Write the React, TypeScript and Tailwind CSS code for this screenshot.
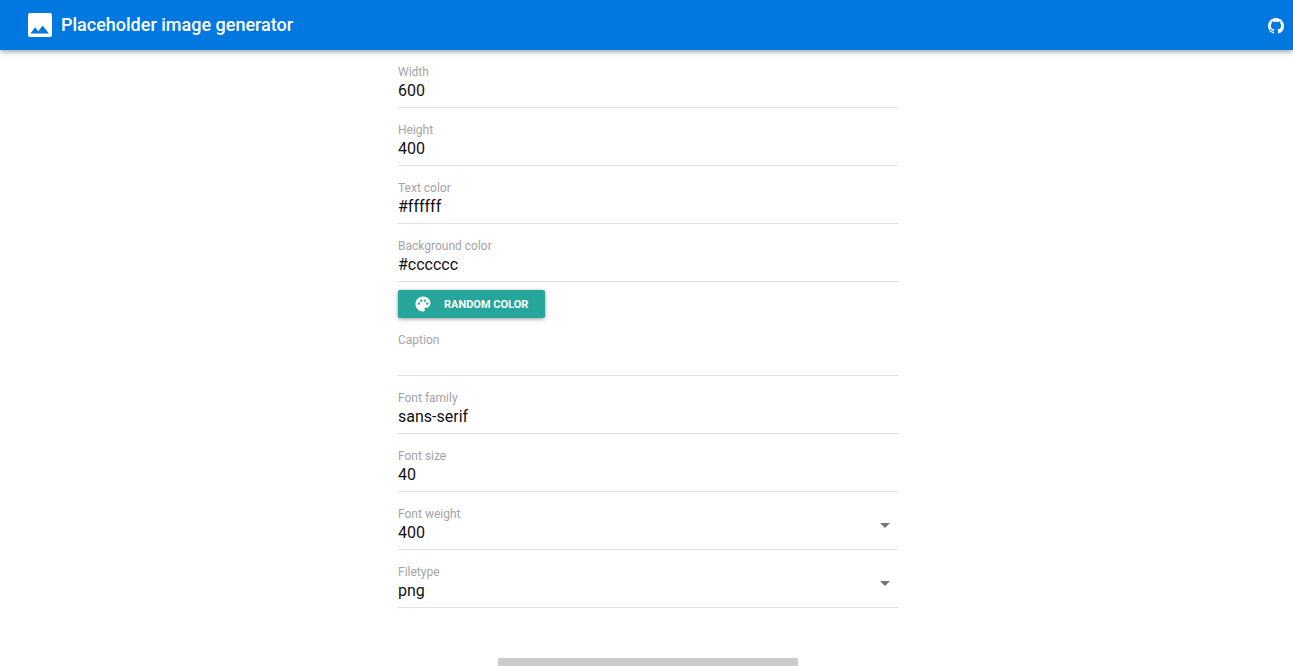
import React from 'react';

const ImageIcon = () => (
  <svg width="24" height="24" viewBox="0 0 24 24" fill="#fff">
    <path d="M2 0h20a2 2 0 0 1 2 2v20a2 2 0 0 1-2 2H2a2 2 0 0 1-2-2V2a2 2 0 0 1 2-2z" />
    <path fill="#0078e0" d="M2.5 20.5l4.6-6.2 3.2 3.9 4.3-5.6 6.4 7.9z" />
  </svg>
);

const GithubIcon = () => (
  <svg width="16" height="16" viewBox="0 0 16 16" fill="#fff">
    <path d="M8 0C3.58 0 0 3.58 0 8c0 3.54 2.29 6.53 5.47 7.59.4.07.55-.17.55-.38 0-.19-.01-.82-.01-1.49-2.01.37-2.53-.49-2.69-.94-.09-.23-.48-.94-.82-1.13-.28-.15-.68-.52-.01-.53.63-.01 1.08.58 1.23.82.72 1.21 1.87.87 2.33.66.07-.52.28-.87.51-1.07-1.78-.2-3.64-.89-3.64-3.95 0-.87.31-1.59.82-2.15-.08-.2-.36-1.02.08-2.12 0 0 .67-.21 2.2.82.64-.18 1.32-.27 2-.27s1.36.09 2 .27c1.53-1.04 2.2-.82 2.2-.82.44 1.1.16 1.92.08 2.12.51.56.82 1.27.82 2.15 0 3.07-1.87 3.75-3.65 3.95.29.25.54.73.54 1.48 0 1.07-.01 1.93-.01 2.2 0 .21.15.46.55.38A8.01 8.01 0 0 0 16 8c0-4.42-3.58-8-8-8z" />
  </svg>
);

const PaletteIcon = () => (
  <svg width="18" height="18" viewBox="0 0 24 24" fill="#fff">
    <path d="M12 2C6.49 2 2 6.49 2 12s4.49 10 10 10c1.38 0 2.5-1.12 2.5-2.5 0-.61-.23-1.2-.64-1.67-.08-.1-.13-.21-.13-.33 0-.28.22-.5.5-.5H16c3.31 0 6-2.69 6-6 0-4.96-4.49-9-10-9zm-5.5 11c-.83 0-1.5-.67-1.5-1.5S5.67 10 6.5 10 8 10.67 8 11.5 7.33 13 6.5 13zm3-4C8.67 9 8 8.33 8 7.5S8.67 6 9.5 6s1.5.67 1.5 1.5S10.33 9 9.5 9zm5 0c-.83 0-1.5-.67-1.5-1.5S13.67 6 14.5 6s1.5.67 1.5 1.5S15.33 9 14.5 9zm3 4c-.83 0-1.5-.67-1.5-1.5s.67-1.5 1.5-1.5 1.5.67 1.5 1.5-.67 1.5-1.5 1.5z" />
  </svg>
);

function Field({ label, value, select }: { label: string; value: string; select?: boolean }) {
  return (
    <div className="relative h-[58px] border-b border-[#e0e0e0] pt-[15px]">
      <div className="text-[12px] leading-[14px] text-[#a3a3a3]">{label}</div>
      <div className="mt-[2px] h-[20px] text-[16px] leading-[20px] text-[#111]">{value}</div>
      {select && (
        <div className="absolute right-[8px] top-[31px] h-0 w-0 border-x-[5px] border-t-[5px] border-x-transparent border-t-[#757575]" />
      )}
    </div>
  );
}

export default function App() {
  return (
    <div className="flex h-screen flex-col overflow-hidden bg-white font-['Roboto',sans-serif]">
      <header className="relative z-10 flex h-[50px] shrink-0 items-center justify-between bg-[#0078e0] pl-[28px] pr-[9px] shadow-[0_2px_5px_rgba(0,0,0,0.35)]">
        <div className="flex items-center gap-[9px]">
          <ImageIcon />
          <h1 className="pb-[1px] text-[18px] font-medium text-white">Placeholder image generator</h1>
        </div>
        <div className="pt-[1px]">
          <GithubIcon />
        </div>
      </header>

      <main className="ml-[398px] w-[500px] shrink-0">
        <Field label="Width" value="600" />
        <Field label="Height" value="400" />
        <Field label="Text color" value="#ffffff" />
        <Field label="Background color" value="#cccccc" />
        <button className="mt-[8px] flex h-[28px] w-[147px] items-center rounded-[2px] bg-[#26a69a] pl-[16px] text-[11px] font-bold text-white shadow-[0_1px_4px_rgba(0,0,0,0.4)]">
          <PaletteIcon />
          <span className="ml-[12px] pt-[2px]">RANDOM COLOR</span>
        </button>
        <Field label="Caption" value="" />
        <Field label="Font family" value="sans-serif" />
        <Field label="Font size" value="40" />
        <Field label="Font weight" value="400" select />
        <Field label="Filetype" value="png" select />
        <div className="mx-auto mt-[50px] h-[400px] w-[300px] bg-[#cccccc]" />
      </main>
    </div>
  );
}
